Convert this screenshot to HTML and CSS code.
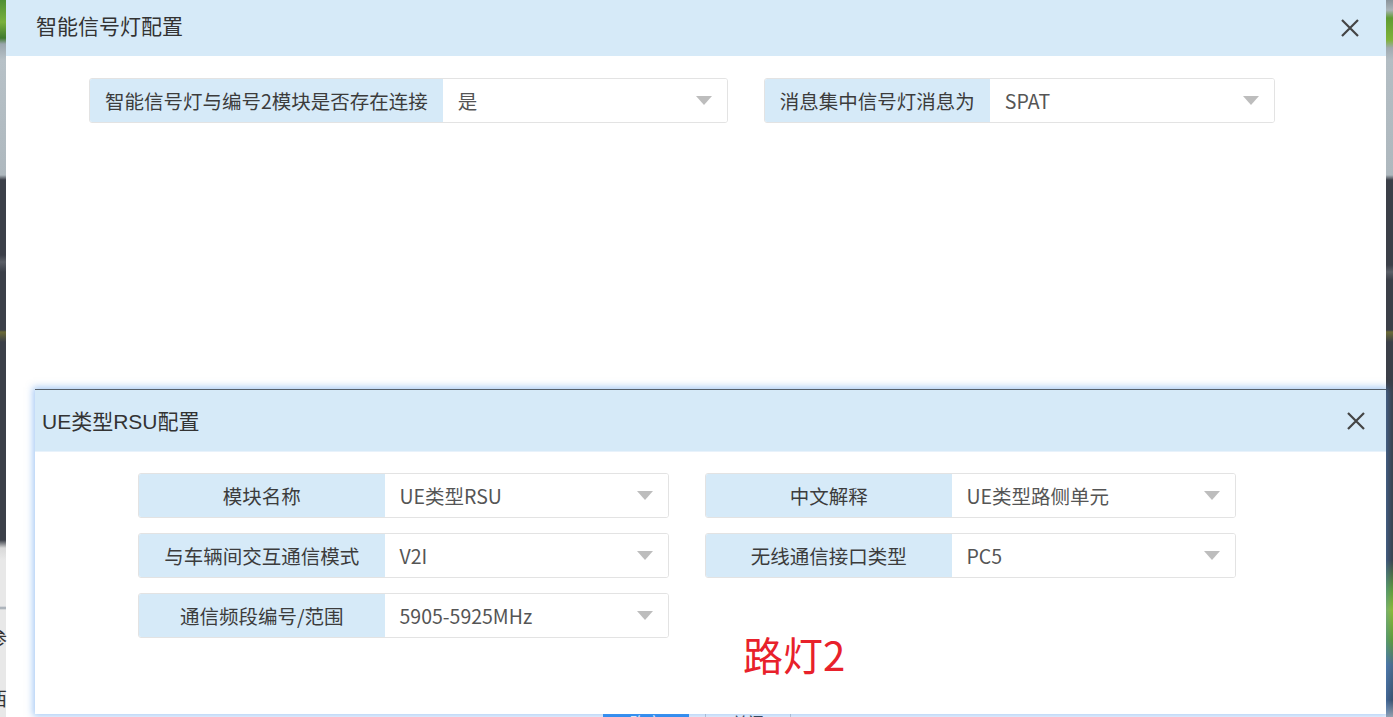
FILE: index.html
```html
<!DOCTYPE html>
<html lang="zh-CN">
<head>
<meta charset="utf-8">
<title>智能信号灯配置</title>
<link rel="stylesheet" href="styles.css">
</head>
<body>
<div class="desk">
  <div class="strip strip-left"><span class="strip-text t1">参</span><span class="strip-text t2">西</span></div>
  <div class="dialog dialog-main">
    <div class="dlg-head">
      <span class="dlg-title main-title">智能信号灯配置</span>
      <span class="dlg-close"><svg width="20" height="20" viewBox="0 0 20 20"><path d="M2 2L18 18M18 2L2 18" stroke="#444" stroke-width="2.2" fill="none"/></svg></span>
    </div>
    <div class="main-body">
      <div class="row-main">
        <div class="field">
          <div class="field-label pad">智能信号灯与编号2模块是否存在连接</div>
          <div class="field-select"><span class="val">是</span><span class="caret"></span></div>
        </div>
        <div class="field">
          <div class="field-label pad">消息集中信号灯消息为</div>
          <div class="field-select"><span class="val">SPAT</span><span class="caret"></span></div>
        </div>
      </div>
    </div>
    <div class="main-foot">
      <span class="btn btn-primary">确定</span>
      <span class="btn btn-default">关闭</span>
    </div>
  </div>
  <div class="strip strip-right"></div>

  <div class="dialog dialog-sub">
    <div class="dlg-head sub-head">
      <span class="dlg-title sub-title">UE类型RSU配置</span>
      <span class="dlg-close"><svg width="20" height="20" viewBox="0 0 20 20"><path d="M2 2L18 18M18 2L2 18" stroke="#444" stroke-width="2.2" fill="none"/></svg></span>
    </div>
    <div class="sub-body">
      <div class="grid">
        <div class="field">
          <div class="field-label fixed">模块名称</div>
          <div class="field-select"><span class="val">UE类型RSU</span><span class="caret"></span></div>
        </div>
        <div class="field">
          <div class="field-label fixed">中文解释</div>
          <div class="field-select"><span class="val">UE类型路侧单元</span><span class="caret"></span></div>
        </div>
        <div class="field">
          <div class="field-label fixed">与车辆间交互通信模式</div>
          <div class="field-select"><span class="val">V2I</span><span class="caret"></span></div>
        </div>
        <div class="field">
          <div class="field-label fixed">无线通信接口类型</div>
          <div class="field-select"><span class="val">PC5</span><span class="caret"></span></div>
        </div>
        <div class="field">
          <div class="field-label fixed">通信频段编号/范围</div>
          <div class="field-select"><span class="val">5905-5925MHz</span><span class="caret"></span></div>
        </div>
      </div>
    </div>
    <div class="note">路灯2</div>
  </div>
</div>
</body>
</html>
```
FILE: styles.css
```css
* { box-sizing: border-box; }
html, body { margin: 0; padding: 0; }
body {
  width: 1393px;
  height: 717px;
  overflow: hidden;
  font-family: "Noto Sans CJK SC", "Liberation Sans", sans-serif;
  color: #333;
}
.desk {
  position: relative;
  display: flex;
  width: 1393px;
  height: 717px;
  overflow: hidden;
}
.strip {
  position: relative;
  flex: none;
  height: 717px;
}
.strip-left {
  width: 6px;
  background: linear-gradient(to bottom,
    #4f8f33 0, #79b13d 22px, #3f7a2e 38px, #9aa6ad 44px, #b7c1c7 60px,
    #aeb8be 175px, #3b3f48 180px, #3b3f48 255px, #5a5e66 262px, #3b3f48 272px,
    #3b3f48 330px, #6b6a36 332px, #3b3f48 342px, #3b3f48 540px,
    #d9d9d9 548px, #e8e8e8 560px, #e8e8e8 606px, #9aa3ad 608px, #e8e8e8 610px, #e8e8e8 100%);
}
.strip-right {
  width: 7px;
  background: linear-gradient(to bottom,
    #8b949b 0, #aab3b8 10px, #5f9b32 18px, #7fb33a 40px, #a0aab0 48px, #b3bdc3 60px,
    #aeb8be 175px, #3b3f48 180px, #3b3f48 265px, #5a5e66 272px, #3b3f48 280px,
    #3b3f48 330px, #6b6a36 332px, #3b3f48 342px, #3b3f48 560px,
    #5f9b32 590px, #8fbd30 610px, #5f9b32 640px, #4b6a8a 665px, #3b4f6a 700px, #9aa3ad 100%);
}
.strip-text {
  position: absolute;
  left: -12px;
  font-size: 19px;
  color: #333;
  line-height: 1;
}
.t1 { top: 628px; }
.t2 { top: 688px; }

.dialog { background: #fff; }
.dialog-main {
  flex: none;
  width: 1380px;
  height: 717px;
  display: flex;
  flex-direction: column;
}
.dlg-head {
  flex: none;
  height: 56px;
  background: #d6eaf8;
  display: flex;
  align-items: center;
  justify-content: space-between;
  padding: 0 26px 0 30px;
}
.dlg-title {
  font-size: 21px;
  color: #333;
  font-family: "Liberation Sans", "Noto Sans CJK SC", sans-serif;
}
.main-title { margin-bottom: 6px; }
.dlg-close { display: flex; width: 20px; height: 20px; }
.main-body {
  flex: 1;
  padding: 22px 0 0 83px;
}
.row-main {
  display: flex;
  gap: 36px;
}
.field {
  display: flex;
  height: 45px;
  border: 1px solid #e3e3e3;
  border-radius: 3px;
  overflow: hidden;
}
.field-label {
  background: #d6eaf8;
  font-size: 19.5px;
  color: #3c3c3c;
  display: flex;
  align-items: center;
  white-space: nowrap;
}
.field-label.pad { padding: 0 15px; }
.field-label.fixed { width: 246px; justify-content: center; }
.field-select {
  width: 284px;
  display: flex;
  align-items: center;
  justify-content: space-between;
  padding: 0 15px;
  background: #fff;
}
.val { font-size: 19.5px; color: #555; white-space: nowrap; }
.caret {
  width: 0; height: 0;
  border-left: 8px solid transparent;
  border-right: 8px solid transparent;
  border-top: 9px solid #bdbdbd;
}
.main-foot {
  flex: none;
  height: 12px;
  display: flex;
  gap: 16px;
  padding-left: 597px;
}
.btn {
  width: 86px;
  height: 34px;
  font-size: 16px;
  display: flex;
  align-items: center;
  justify-content: center;
  border-radius: 3px;
}
.btn-primary { background: #2d8cf0; color: #fff; }
.btn-default { background: #fff; border: 1px solid #ccc; color: #333; }

.dialog-sub {
  position: absolute;
  left: 35px;
  top: 389px;
  width: 1351px;
  height: 325px;
  border-top: 1px solid #56606b;
  box-shadow: 0 0 7px 2px rgba(80, 150, 235, 0.5);
  display: flex;
  flex-direction: column;
}
.sub-head {
  height: 62px;
  padding: 0 20px 0 7px;
  border-bottom: 1px solid #e8f2fb;
}
.sub-title { font-size: 21px; margin-bottom: 2px; }
.sub-body {
  padding: 21px 0 0 103px;
}
.grid {
  display: grid;
  grid-template-columns: 531px 531px;
  column-gap: 36px;
  row-gap: 15px;
}
.note {
  position: absolute;
  left: 708px;
  top: 240px;
  font-size: 40px;
  line-height: 1.2;
  color: #e8212b;
}
```
